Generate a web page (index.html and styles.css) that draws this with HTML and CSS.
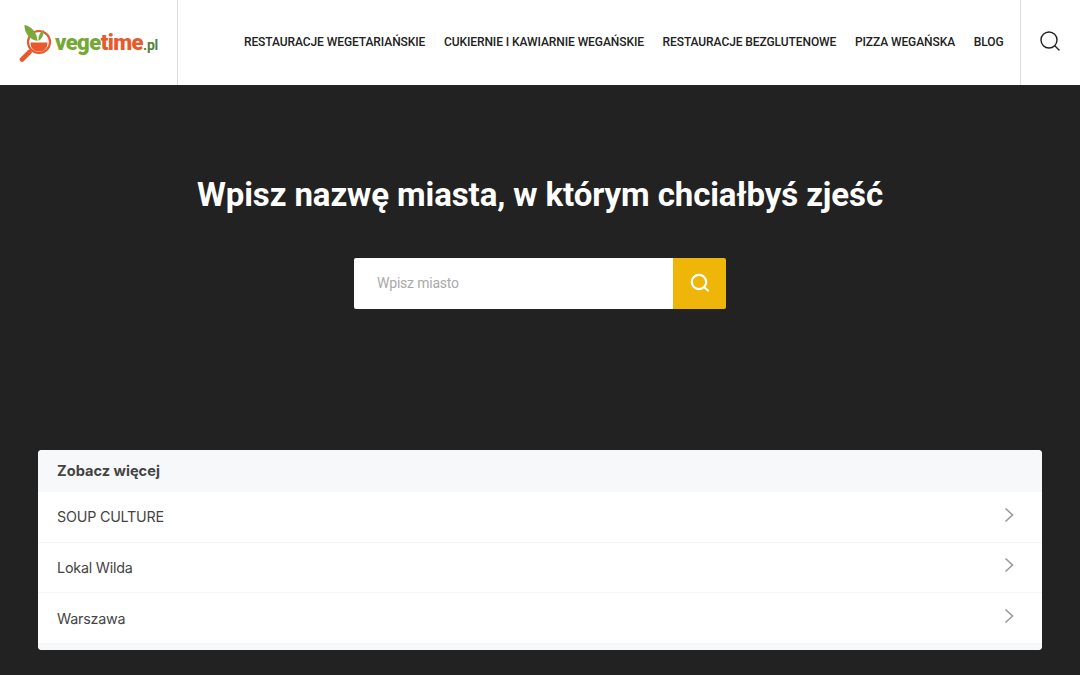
FILE: index.html
```html
<!DOCTYPE html>
<html lang="pl">
<head>
    <meta charset="utf-8">
    <title>vegetime.pl</title>
    <link rel="stylesheet" href="styles.css">
</head>
<body>
<header class="topbar">
    <a class="logo" href="#">
        <svg class="logo-icon" width="33" height="40" viewBox="19 20 33 40">
            <!-- lupa -->
            <path d="M22 56.5 L29.5 49" stroke="#e8592b" stroke-width="4.6" stroke-linecap="round" fill="none"/>
            <circle cx="39" cy="39" r="11" fill="#fff" stroke="#e8592b" stroke-width="2.2"/>
            <path d="M30.5 39.5 H47.5 C47.5 45.5 44 48.5 39 48.5 C34 48.5 30.5 45.5 30.5 39.5 Z" fill="#e8592b"/>
            <!-- listki -->
            <path d="M24.5 22 C31 23 37 29 37.5 38 C30 37 24 30 24.5 22 Z" fill="#7aa93b"/>
            <path d="M44 27 C44 31 42 36 38.5 38 C38 33 40 29 44 27 Z" fill="#7aa93b"/>
        </svg>
        <span class="logo-text"><span class="green">vege</span><span class="orange">time</span><small>.pl</small></span>
    </a>
    <nav class="menu">
        <a href="#">Restauracje wegetariańskie</a>
        <a href="#">Cukiernie i kawiarnie wegańskie</a>
        <a href="#">Restauracje bezglutenowe</a>
        <a href="#">Pizza wegańska</a>
        <a href="#">Blog</a>
    </nav>
    <div class="top-search">
        <svg width="22" height="22" viewBox="0 0 22 22" fill="none" stroke="#222" stroke-width="1.4">
            <circle cx="10" cy="10" r="8"/>
            <path d="M16 16 L20 20" stroke-linecap="round"/>
        </svg>
    </div>
</header>

<main class="hero">
    <h1>Wpisz nazwę miasta, w którym chciałbyś zjeść</h1>
    <form class="search-form">
        <input type="text" placeholder="Wpisz miasto">
        <button type="button">
            <svg width="20" height="20" viewBox="0 0 20 20" fill="none" stroke="#fff" stroke-width="2.2">
                <circle cx="9" cy="9" r="7.2"/>
                <path d="M14.5 14.5 L18 17.5" stroke-linecap="round"/>
            </svg>
        </button>
    </form>

    <section class="more">
        <h2>Zobacz więcej</h2>
        <a class="more-row" href="#">SOUP CULTURE
            <svg width="10" height="16" viewBox="0 0 10 16" fill="none" stroke="#999" stroke-width="1.6"><path d="M1.5 1.5 L8.5 8 L1.5 14.5"/></svg>
        </a>
        <a class="more-row" href="#">Lokal Wilda
            <svg width="10" height="16" viewBox="0 0 10 16" fill="none" stroke="#999" stroke-width="1.6"><path d="M1.5 1.5 L8.5 8 L1.5 14.5"/></svg>
        </a>
        <a class="more-row" href="#">Warszawa
            <svg width="10" height="16" viewBox="0 0 10 16" fill="none" stroke="#999" stroke-width="1.6"><path d="M1.5 1.5 L8.5 8 L1.5 14.5"/></svg>
        </a>
        <div class="more-end"></div>
    </section>
</main>
</body>
</html>
```

FILE: styles.css
```css
* {
    box-sizing: border-box;
}

html, body {
    margin: 0;
    height: 100%;
}

body {
    display: flex;
    flex-direction: column;
    font-family: Roboto, Arial, sans-serif;
    background-color: #222222;
    overflow: hidden;
}

a {
    text-decoration: none;
}

.topbar {
    display: flex;
    align-items: stretch;
    height: 85px;
    background-color: #fff;
}

.logo {
    display: flex;
    align-items: center;
    width: 178px;
    padding: 0 0 0 19px;
    border-right: 1px solid #dddddd;
}

.logo-icon {
    flex: none;
    margin-right: 3px;
}

.logo-text {
    font-family: Roboto, Arial, sans-serif;
    font-size: 22px;
    font-weight: 900;
    letter-spacing: -0.55px;
}

.logo-text small {
    font-size: 14px;
    font-weight: 700;
    color: #55803a;
    letter-spacing: -0.2px;
}

.green {
    color: #75a836;
}

.orange {
    color: #e8592b;
}

.menu {
    flex: 1;
    display: flex;
    justify-content: flex-end;
    align-items: center;
    gap: 18.6px;
    padding: 0 16.5px 2px 0;
}

.menu a {
    font-size: 12px;
    font-weight: 500;
    letter-spacing: -0.08px;
    color: #222;
    text-transform: uppercase;
    white-space: nowrap;
}

.top-search {
    display: flex;
    align-items: center;
    justify-content: center;
    width: 60px;
    padding: 0 2px 4px 0;
    border-left: 1px solid #dddddd;
}

.hero {
    flex: 1;
    display: flex;
    flex-direction: column;
    align-items: center;
    padding: 0 38px;
}

.hero h1 {
    margin: 90px 0 0;
    font-size: 33px;
    line-height: 40px;
    font-weight: 700;
    letter-spacing: -0.1px;
    color: #fff;
}

.search-form {
    display: flex;
    width: 372px;
    height: 51px;
    margin-top: 43px;
}

.search-form input {
    flex: 1;
    min-width: 0;
    padding: 0 23px 2px;
    border: none;
    border-radius: 2px 0 0 2px;
    font-family: Roboto, Arial, sans-serif;
    font-size: 14px;
    letter-spacing: -0.2px;
    background-color: #fff;
}

.search-form input::placeholder {
    color: #aaaaaa;
}

.search-form button {
    display: flex;
    align-items: center;
    justify-content: center;
    width: 53px;
    padding: 0 0 1px;
    border: none;
    border-radius: 0 2px 2px 0;
    background-color: #efb509;
}

.more {
    align-self: stretch;
    margin-top: 141px;
    border-radius: 4px;
    overflow: hidden;
    background-color: #fff;
    font-family: Inter, Arial, sans-serif;
}

.more h2 {
    margin: 0;
    padding: 0 19px;
    height: 42px;
    line-height: 42px;
    font-size: 14.6px;
    font-weight: 700;
    color: #444;
    background-color: #f7f8fa;
}

.more-row {
    display: flex;
    justify-content: space-between;
    align-items: center;
    height: 50.67px;
    padding: 0 28px 0 19px;
    font-size: 14.3px;
    letter-spacing: -0.2px;
    color: #444;
    border-bottom: 1px solid #f5f5f5;
}

.more-row svg {
    margin-bottom: 4px;
}

.more-end {
    height: 6px;
    background-color: #f7f8fa;
}
```
